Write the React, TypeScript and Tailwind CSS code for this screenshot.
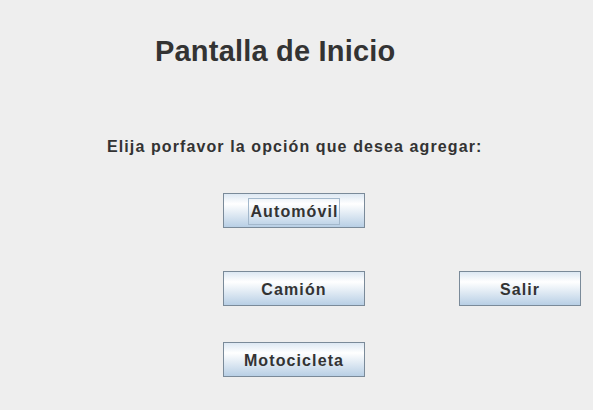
import React from 'react';

const font = { fontFamily: '"Liberation Sans", Arial, sans-serif' };

interface SwingButtonProps {
  label: string;
  width: string;
  focused?: boolean;
}

const SwingButton: React.FC<SwingButtonProps> = ({ label, width, focused }) => {
  return (
    <button
      className={`${width} h-[35px] pt-[2px] flex items-center justify-center border border-[#7a8a99] bg-[linear-gradient(to_bottom,#dde8f3_0%,#ffffff_30%,#b8cfe5_100%)] text-[16px] font-bold tracking-[1.1px] text-[#333333]`}
    >
      {focused ? (
        <span className="h-[27px] flex items-center border border-[#a3b8cc] pl-[1px]">
          {label}
        </span>
      ) : (
        label
      )}
    </button>
  );
};

export default function App() {
  return (
    <div className="w-[593px] h-[410px] bg-[#eeeeee] overflow-hidden" style={font}>
      <h1 className="pl-[155px] pt-[35px] text-[29px] leading-[32px] font-bold text-[#333333] tracking-[0.2px]">
        Pantalla de Inicio
      </h1>
      <p className="pl-[107px] mt-[71px] text-[16px] leading-[18px] font-bold tracking-[1.1px] text-[#333333]">
        Elija porfavor la opción que desea agregar:
      </p>
      <div className="pl-[223px] mt-[37px] flex flex-col">
        <SwingButton label="Automóvil" width="w-[142px]" focused />
        <div className="mt-[43px] flex gap-[94px]">
          <SwingButton label="Camión" width="w-[142px]" />
          <SwingButton label="Salir" width="w-[122px]" />
        </div>
        <div className="mt-[36px]">
          <SwingButton label="Motocicleta" width="w-[142px]" />
        </div>
      </div>
    </div>
  );
}
